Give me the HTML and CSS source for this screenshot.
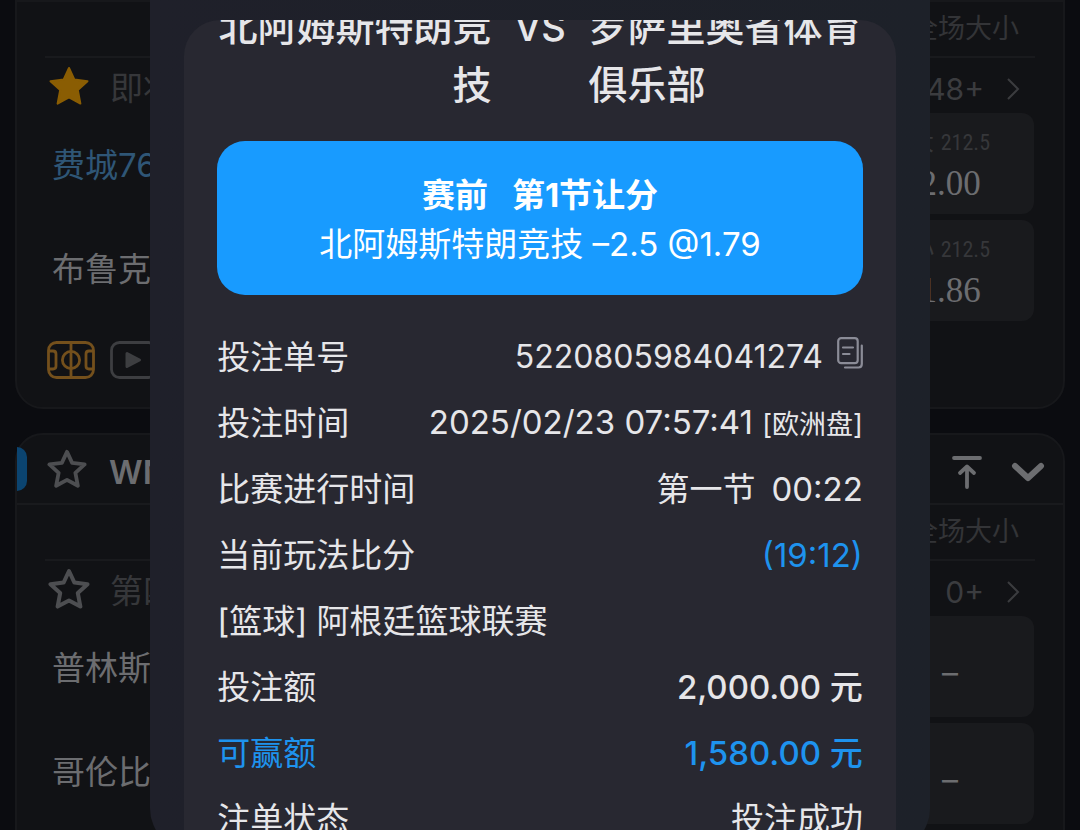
FILE: index.html
```html
<!DOCTYPE html>
<html lang="zh-CN">
<head>
<meta charset="utf-8">
<meta name="viewport" content="width=device-width, initial-scale=1">
<title>投注详情</title>
<link rel="stylesheet" href="styles.css">
</head>
<body>
<svg class="defs" aria-hidden="true">
  <symbol id="star" viewBox="0 0 42 42"><path d="M21 3 L26.4 14.6 L39.5 16.2 L29.8 25 L32.4 38.6 L21 32.4 L9.6 38.6 L12.2 25 L2.5 16.2 L15.6 14.6 Z" stroke-linejoin="round"/></symbol>
  <symbol id="next" viewBox="0 0 14 24"><path d="M2 2 L12 12 L2 22" fill="none" stroke="currentColor" stroke-width="2"/></symbol>
</svg>

<main class="matches" inert>
  <section class="league league-open">
    <div class="columns"><span class="column-name">全场大小</span></div>
    <div class="meta">
      <button class="icon-button star-on" aria-label="取消收藏"><svg width="42" height="42"><use href="#star"/></svg></button>
      <span class="phase">即将</span>
      <a class="more" href="#">48+ <svg width="14" height="24"><use href="#next"/></svg></a>
    </div>
    <div class="board">
      <div class="teams"><span class="team team-home">费城76</span><span class="team">布鲁克</span></div>
      <div class="odds">
        <button class="cell"><span class="line">大 <b class="line-value">212.5</b></span><span class="price">2.00</span></button>
        <button class="cell"><span class="line">小 <b class="line-value">212.5</b></span><span class="price">1.86</span></button>
      </div>
    </div>
    <div class="tools">
      <button class="icon-button tool-field" aria-label="赛况">
        <svg width="48" height="38" viewBox="0 0 48 38" fill="none" stroke="currentColor" stroke-width="2.8"><rect x="1.5" y="1.5" width="45" height="35" rx="8"/><path d="M24 2V36M2 10H6Q9 10 9 13V25Q9 28 6 28H2M46 10H42Q39 10 39 13V25Q39 28 42 28H46"/><circle cx="24" cy="19" r="8.6"/></svg>
      </button>
      <button class="icon-button tool-video" aria-label="视频">
        <svg width="48" height="38" viewBox="0 0 48 38"><rect x="1.5" y="1.5" width="45" height="35" rx="8" fill="none" stroke="currentColor" stroke-width="2.8"/><path d="M17 12.5L29.5 19L17 25.500Z" fill="currentColor" stroke="currentColor" stroke-width="3" stroke-linejoin="round"/></svg>
      </button>
    </div>
  </section>

  <section class="league league-last">
    <header class="league-head">
      <button class="icon-button star-off" aria-label="收藏联赛"><svg width="40" height="40"><use href="#star"/></svg></button>
      <h2 class="league-name">WNBA</h2>
      <button class="icon-button" aria-label="置顶"><svg width="32" height="34" viewBox="0 0 32 34" fill="none" stroke="currentColor" stroke-width="3.800" stroke-linecap="round"><path d="M3 3H29"/><path d="M16 32V12M9 18L16 11.500L23 18" stroke-linejoin="round"/></svg></button>
      <button class="icon-button" aria-label="展开"><svg width="34" height="20" viewBox="0 0 34 20" fill="none" stroke="currentColor" stroke-width="6" stroke-linecap="round" stroke-linejoin="round"><path d="M4 4L17 16L30 4"/></svg></button>
    </header>
    <div class="columns"><span class="column-name">全场大小</span></div>
    <div class="meta">
      <button class="icon-button star-off" aria-label="收藏"><svg width="42" height="42"><use href="#star"/></svg></button>
      <span class="phase">第四</span>
      <a class="more" href="#">0+ <svg width="14" height="24"><use href="#next"/></svg></a>
    </div>
    <div class="board">
      <div class="teams"><span class="team">普林斯</span><span class="team">哥伦比</span></div>
      <div class="odds">
        <button class="cell cell-empty">–</button>
        <button class="cell cell-empty">–</button>
      </div>
    </div>
  </section>
</main>

<div class="overlay">
  <div class="modal" role="dialog" aria-label="注单详情">
    <article class="slip">
      <h1 class="versus"><span class="side side-home">北阿姆斯特朗竞技</span><span class="vs">VS</span><span class="side">罗萨里奥省体育俱乐部</span></h1>
      <div class="pick">
        <strong class="pick-market"><span>赛前</span><span>第1节让分</span></strong>
        <span>北阿姆斯特朗竞技 –2.5 @1.79</span>
      </div>
      <dl class="details">
        <div class="row"><dt>投注单号</dt><dd class="with-copy">5220805984041274
          <button class="icon-button copy" aria-label="复制"><svg width="26" height="32" viewBox="0 0 26 32" fill="none" stroke="currentColor" stroke-width="2.2" stroke-linecap="round"><rect x="1.200" y="1.200" width="19.500" height="25" rx="3"/><path d="M6 10.500H16M6 17H12.500M24.800 8.500V27Q24.800 30.500 21.500 30.500H8"/></svg></button></dd></div>
        <div class="row"><dt>投注时间</dt><dd>2025/02/23 07:57:41 <small class="odds-type">[欧洲盘]</small></dd></div>
        <div class="row"><dt>比赛进行时间</dt><dd class="clock"><span>第一节</span><span>00:22</span></dd></div>
        <div class="row"><dt>当前玩法比分</dt><dd class="accent">(19:12)</dd></div>
        <div class="row"><dt>[篮球] 阿根廷篮球联赛</dt></div>
        <div class="row"><dt>投注额</dt><dd class="amount">2,000.00 元</dd></div>
        <div class="row accent"><dt>可赢额</dt><dd class="amount">1,580.00 元</dd></div>
        <div class="row"><dt>注单状态</dt><dd>投注成功</dd></div>
      </dl>
    </article>
  </div>
</div>
</body>
</html>
```
FILE: styles.css
```css
* { box-sizing: border-box; }

body {
  position: relative;
  height: 100vh;
  margin: 0;
  overflow: hidden;
  background: #0b0c10;
  color: #e6e6e9;
  font-family: Inter, "Noto Sans CJK SC", sans-serif;
  font-size: 33px;
}

button { font: inherit; color: inherit; border: 0; padding: 0; }
.defs { display: none; }
.icon-button { display: flex; background: none; }

/* Match list */
.matches {
  display: flex;
  flex-direction: column;
  gap: 24px;
  padding: 0 15px;
  color: #6c6d70;
}
.league {
  background: #111215;
  border: 2px solid #17181b;
  border-radius: 28px;
}
.league-open { border-top-left-radius: 0; border-top-right-radius: 0; }
.league-last { padding-bottom: 86px; }
.league-head {
  display: flex;
  align-items: center;
  gap: 28px;
  height: 70px;
  padding: 6px 18px 0 0;
  border-bottom: 2px solid #191a1d;
}
.league-head::before {
  content: "";
  width: 10px;
  height: 44px;
  margin: 0 -8px 6px 0;
  border-radius: 0 10px 10px 0;
  background: #0b4470;
}
.league-head .star-off { margin-right: -6px; padding-bottom: 6px; }
.league-name { flex: 1; margin: 0; font-size: 33px; font-weight: 600; }
.columns {
  display: flex;
  justify-content: flex-end;
  align-items: center;
  height: 56px;
  margin: 0 28px;
  padding: 0 16px 5px 0;
  border-bottom: 2px solid #191a1d;
  color: #333437;
  font-size: 27px;
}
.meta {
  display: flex;
  align-items: center;
  gap: 20px;
  height: 55px;
  padding: 0 43px 0 31px;
  color: #36373a;
}
.phase { flex: 1; }
.more {
  display: flex;
  align-items: center;
  gap: 22px;
  padding-top: 6px;
  color: #3b3c3f;
  font-size: 30px;
  text-decoration: none;
}
.star-on { fill: #8a5d03; stroke: #8a5d03; stroke-width: 2px; }
.star-off { fill: none; stroke: #4d4e51; stroke-width: 4px; }
.board { display: flex; justify-content: space-between; padding: 0 29px 0 35px; }
.teams { display: grid; grid-auto-rows: 104px; align-items: center; line-height: 48px; }
.team-home { color: #2f5676; }
.odds { display: grid; gap: 6px; width: 168px; }
.cell {
  display: flex;
  flex-direction: column;
  justify-content: center;
  align-items: center;
  height: 101px;
  border-radius: 12px;
  background: #191a1d;
}
.cell-empty { padding-top: 12px; font-size: 32px; }
.line { color: #36373a; font-size: 24px; line-height: 40px; }
.line-value {
  font-family: "Roboto Condensed", "Liberation Sans Narrow", Roboto, sans-serif;
  font-size: 22px;
  font-weight: 400;
}
.price { font-family: "Liberation Serif", serif; font-size: 35px; line-height: 42px; }
.tools { display: flex; align-items: center; gap: 15px; height: 86px; padding: 0 30px 8px; }
.tool-field { color: #74501c; }
.tool-video { color: #3d3e41; }

/* Bet slip */
.overlay {
  position: absolute;
  inset: 0;
  display: flex;
  justify-content: center;
  align-items: flex-start;
}
.modal {
  width: 72.2%;
  padding: 20px 34px 0;
  border-radius: 0 0 44px 44px;
  background: linear-gradient(90deg, #1f202a, #1d2129);
}
.slip {
  padding: 0 33px;
  overflow: hidden;
  border-radius: 36px 36px 0 0;
  background: #282831;
}
.versus {
  display: grid;
  grid-template-columns: 1fr 97px 1fr;
  margin: -22px 0 27px;
  font-size: 39px;
  font-weight: 500;
  line-height: 58px;
  text-align: left;
}
.side-home { text-align: right; }
.vs { text-align: center; font-size: 38px; }
.pick {
  display: flex;
  flex-direction: column;
  align-items: center;
  padding: 30px 20px 26px;
  border-radius: 28px;
  background: #189bff;
  color: #fff;
  line-height: 49px;
}
.pick-market { display: flex; gap: 24px; }
.details { margin: 29px 0 0; }
.row {
  display: flex;
  justify-content: space-between;
  align-items: center;
  height: 66px;
  line-height: 66px;
}
.row dd { margin: 0; }
.with-copy { display: flex; align-items: center; gap: 14px; font-size: 32px; }
.copy { color: #8b8c97; padding-bottom: 8px; }
.odds-type { font-size: 27px; }
.clock { display: flex; gap: 16px; }
.accent { color: #1e93ee; }
.amount { font-weight: 500; }
```
